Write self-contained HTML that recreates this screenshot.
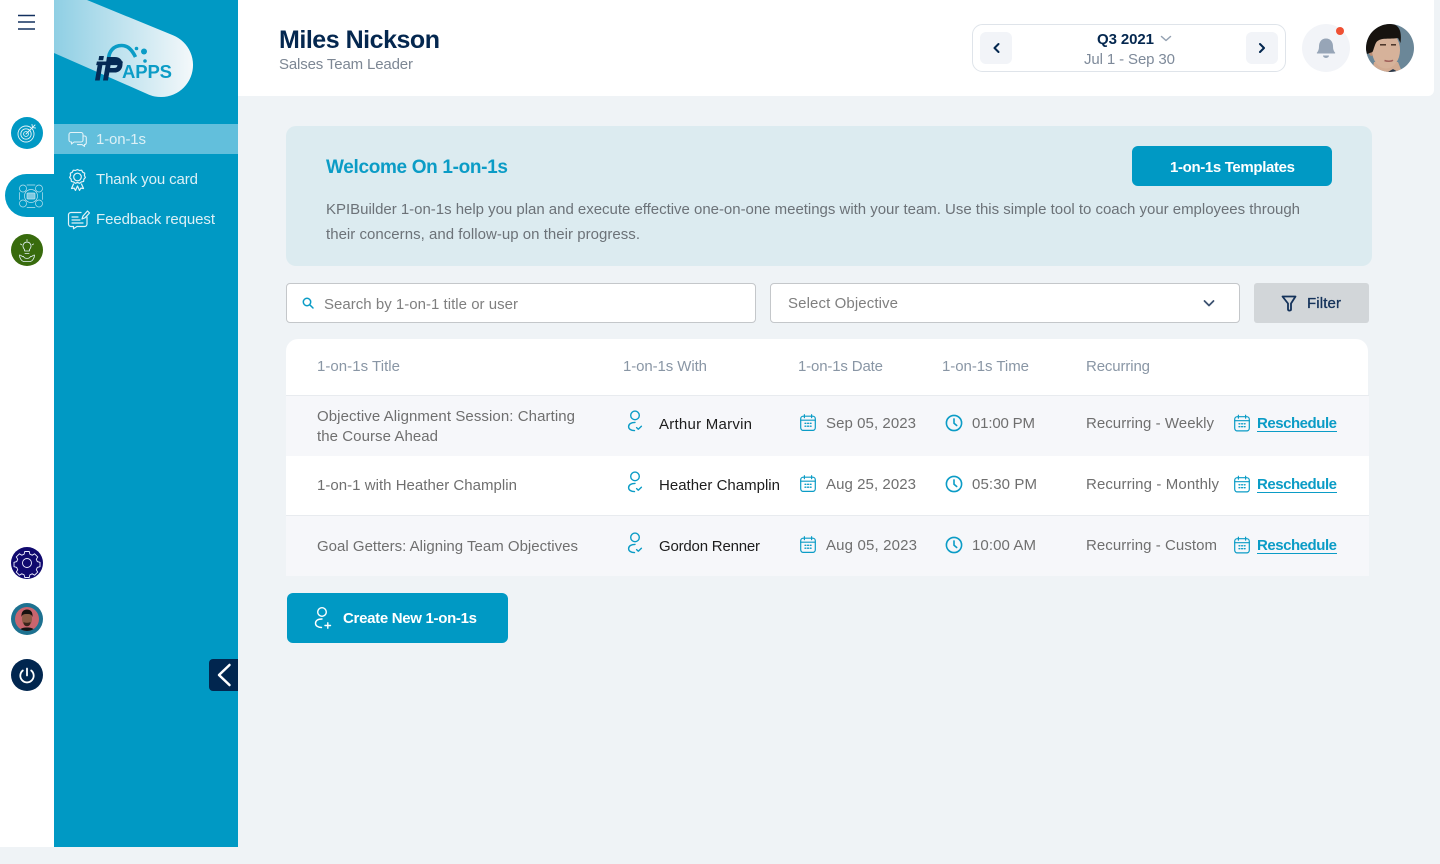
<!DOCTYPE html>
<html lang="en"><head><meta charset="utf-8"><title>1-on-1s</title>
<style>
html,body{margin:0;padding:0;width:1440px;height:864px;overflow:hidden;background:#eff3f6}
svg{position:absolute;left:0;top:0;display:block}
text{font-family:"Liberation Sans",sans-serif;font-size:15px}
.b{font-weight:700}
.g{fill:#6f6f6f}.h{fill:#8996a5}.d{fill:#1d1d1d}.s{fill:#dcf0f6}.l{fill:#0b9cc6;font-weight:700}
.ic{fill:none;stroke:#0b9cc6;stroke-width:1.5;stroke-linecap:round;stroke-linejoin:round}
.w{fill:none;stroke:#e4f3f8;stroke-width:1.1;stroke-linecap:round;stroke-linejoin:round}
</style></head><body>
<svg width="1440" height="864" viewBox="0 0 1440 864" xmlns="http://www.w3.org/2000/svg">
<defs>
<linearGradient id="pill" x1="54" x2="193" y1="0" y2="0" gradientUnits="userSpaceOnUse"><stop offset="0" stop-color="#8fcfe4"/><stop offset="1" stop-color="#f4f8fa"/></linearGradient>
<g id="cal" class="ic" style="stroke-width:1.2"><rect x="0.7" y="2.2" width="14.6" height="14.2" rx="2.6"/><path d="M0.7 6.2H15.3M4.4 0.7V3.6M11.6 0.7V3.6"/><path d="M5 9.3h.9M7.6 9.3h.9M10.2 9.3h.9M5 12.2h.9M7.6 12.2h.9M10.2 12.2h.9" stroke-width="1.3"/></g>
<g id="usr" class="ic" style="stroke-width:1.4"><circle cx="8" cy="5.4" r="4.3"/><path d="M8 12.4C4.3 12.4 1.6 14 1.6 16.6C1.6 19 4 20.6 7.5 20.6"/><path d="M9.6 17.6L11.3 19.2L14.4 16.2"/></g>
<g id="clk" class="ic" style="stroke-width:1.6"><circle cx="8.5" cy="8.5" r="7.6"/><path d="M8.5 4.4V8.8L11.2 11"/></g>
<clipPath id="av1"><circle cx="1390" cy="48" r="24"/></clipPath>
<clipPath id="av2"><circle cx="27" cy="619" r="12"/></clipPath>
</defs>

<rect width="1440" height="864" fill="#eff3f6"/>
<!-- top bar -->
<path d="M238 0H1434V90a6 6 0 0 1-6 6H238Z" fill="#fff"/>
<!-- left rail -->
<rect x="0" y="0" width="54" height="847" fill="#fff"/>
<rect x="54" y="0" width="184" height="847" fill="#0099c4"/>
<!-- hamburger -->
<path d="M18 15.5H35M18 22H35M18 29H35" stroke="#12305f" stroke-width="1.6" fill="none"/>
<!-- logo -->
<path d="M54 0H87L173 35.3A32 32 0 0 1 149 94.7L54 53Z" fill="url(#pill)"/>
<path d="M108.500 60C108.500 51 114 45.500 121.500 45.500C128 45.500 132 50 135.500 57" fill="none" stroke="#0b9cc6" stroke-width="3.600"/>
<circle cx="144" cy="51.500" r="3" fill="#0b9cc6"/><circle cx="136.500" cy="48.500" r="1.800" fill="#0b9cc6"/><circle cx="145" cy="61" r="1.800" fill="#0b9cc6"/>
<text x="122" y="78" textLength="50" lengthAdjust="spacing" style="font-size:18.500px;font-weight:700" fill="#0b9cc6">APPS</text>
<rect x="96" y="61.500" width="26" height="3.600" fill="#052a55" transform="skewX(-12) translate(14 0)"/>
<text x="95" y="80" textLength="27" lengthAdjust="spacingAndGlyphs" style="font-size:32px;font-weight:700;font-style:italic;stroke:#052a55;stroke-width:.9" fill="#052a55">iP</text>
<!-- active item -->
<rect x="54" y="124" width="184" height="30" fill="#62bfdc"/>
<!-- rail buttons -->
<circle cx="27" cy="133" r="16" fill="#0099c4"/>
<g class="w" style="stroke-width:.9"><circle cx="26" cy="134" r="8"/><circle cx="26" cy="134" r="5.200"/><circle cx="26" cy="134" r="2.400"/><path d="M26 134L35 125M32 124.500L32.500 127.500L35.500 128"/></g>
<path d="M54 174H26.500A21.500 21.500 0 0 0 26.500 217H54Z" fill="#0099c4"/>
<g class="w" style="stroke-width:.7;stroke:#bfe3ef"><rect x="27" y="193" width="8" height="6" rx="1" fill="#7fc9e0"/><circle cx="31" cy="196" r="6.500"/><circle cx="23" cy="188.500" r="3.500"/><circle cx="39" cy="188.500" r="3.500"/><circle cx="23" cy="203.500" r="3.500"/><circle cx="39" cy="203.500" r="3.500"/><path d="M27 185H35M27 207.500H35M19.500 192.500V199.500M42.500 192.500V199.500"/></g>
<circle cx="27" cy="250" r="16" fill="#386b0d"/>
<g class="w" style="stroke-width:.85"><path d="M23.500 248a4 4 0 1 1 7 0c-.8 1-1.200 1.800-1.200 3h-4.600c0-1.200-.4-2-1.200-3Z"/><path d="M25 253.500h4M27 239.500v1.500M20.500 244l1.300.8M33.500 244l-1.300.8"/><path d="M19.500 255c2 0 2 2 4 1.500c1 2.500 6 2.500 7 0c2 .5 2-1.500 4-1.500c0 3-2 6-4 6.500h-7c-2-.5-4-3.500-4-6.500Z"/></g>
<circle cx="27" cy="563" r="16" fill="#10096e"/>
<g fill="none" stroke="#eef0ff" stroke-width=".9"><circle cx="27" cy="563" r="4.500"/><path d="M24.800 551.500h4.400l.7 2.700l2.300 1l2.400-1.400l3.100 3.100l-1.400 2.400l1 2.300l2.700.7v4.400l-2.700.7l-1 2.300l1.400 2.400l-3.100 3.100l-2.400-1.400l-2.300 1l-.7 2.700h-4.400l-.7-2.700l-2.300-1l-2.400 1.400l-3.100-3.100l1.400-2.400l-1-2.300l-2.700-.7v-4.400l2.700-.7l1-2.300l-1.400-2.400l3.100-3.100l2.400 1.400l2.300-1Z"/></g>
<circle cx="27" cy="619" r="16" fill="#1d7190"/>
<g clip-path="url(#av2)"><rect x="15" y="607" width="24" height="24" fill="#c9656e"/><path d="M19 632c0-3.500 4-4.500 8-4.500s8 1 8 4.500Z" fill="#141414"/><ellipse cx="27" cy="619" rx="5" ry="7" fill="#8c5b45"/><path d="M21.500 617c-.5-5 2-7.500 5.500-7.500s6 2.500 5.500 7.500c-1-2.500-2-3-5.500-3s-4.500.5-5.500 3Z" fill="#17110f"/><path d="M23.500 622c0 3 1.500 4.200 3.500 4.200s3.500-1.200 3.500-4.200c-2 1-5 1-7 0Z" fill="#3a241b"/></g>
<circle cx="27" cy="675" r="16" fill="#01264f"/>
<path d="M27 668.500V675.500M22.800 670.500A6.700 6.700 0 1 0 31.200 670.500" fill="none" stroke="#fff" stroke-width="1.800" stroke-linecap="round"/>
<path d="M238 659H213a4 4 0 0 0-4 4v24a4 4 0 0 0 4 4h25Z" fill="#01264f"/>
<path d="M229.500 665L219 675L229.500 685" fill="none" stroke="#fff" stroke-width="2.500" stroke-linecap="round" stroke-linejoin="round"/>
<!-- sidebar icons -->
<g class="w"><path d="M71 132.500h10a2 2 0 0 1 2 2v5.500a2 2 0 0 1-2 2h-7l-2.500 2v-2h-.5a2 2 0 0 1-2-2v-5.500a2 2 0 0 1 2-2Z"/><path d="M83 136h1.500a1.800 1.800 0 0 1 1.800 1.800v5a1.800 1.800 0 0 1-1.800 1.800v1.800l-2.500-1.800h-4.500"/></g>
<g class="w" style="stroke-width:1.200"><circle cx="77.500" cy="177" r="3.800"/><path d="M77.500 169.500l2 1 2.200-.3 1 2 2 1 -.3 2.300 1 2-1.500 1.600-.3 2.300-2.200.5-1.700 1.400-2.200-.8-2.200.8-1.700-1.400-2.200-.5-.3-2.300-1.500-1.600 1-2-.3-2.300 2-1 1-2 2.200.3Z"/><path d="M73.500 184l-2 4.500 2.600-.4 1.400 2.300 2-4.400 2 4.400 1.400-2.300 2.600.4-2-4.500"/></g>
<g class="w" style="stroke-width:1.200"><path d="M81 212.500H71a2.500 2.500 0 0 0-2.500 2.500v9a2.500 2.500 0 0 0 2.500 2.500h2.500v2.300l3.500-2.300h7.500a2.500 2.500 0 0 0 2.500-2.500v-7"/><path d="M72 217h6M72 220h8M72 223h11"/><path d="M82 219l1-3 4.500-5 2 2-4.500 4.800Z"/></g>
<text class="s" x="96" y="144" textLength="50" lengthAdjust="spacing">1-on-1s</text>
<text class="s" x="96" y="184" textLength="102" lengthAdjust="spacing">Thank you card</text>
<text class="s" x="96" y="224" textLength="119" lengthAdjust="spacing">Feedback request</text>

<!-- header -->
<text x="279" y="48" textLength="161" lengthAdjust="spacing" style="font-size:25px;font-weight:700" fill="#04274f">Miles Nickson</text>
<text x="279" y="69" textLength="134" lengthAdjust="spacing" fill="#7d8794">Salses Team Leader</text>
<rect x="972.500" y="24.500" width="313" height="47" rx="10" fill="#fff" stroke="#dfe4ea"/>
<rect x="980" y="32" width="32" height="32" rx="6" fill="#f2f4f8"/><rect x="1246" y="32" width="32" height="32" rx="6" fill="#f2f4f8"/>
<path d="M998.500 44L994.500 48L998.500 52M1260 44L1264 48L1260 52" fill="none" stroke="#04274f" stroke-width="2" stroke-linecap="round" stroke-linejoin="round"/>
<text class="b" x="1097" y="44" textLength="57" lengthAdjust="spacing" fill="#04274f">Q3 2021</text>
<path d="M1161.500 36.500L1166 40.500L1170.500 36.500" fill="none" stroke="#94a1b2" stroke-width="1.500" stroke-linecap="round" stroke-linejoin="round"/>
<text x="1084" y="64" textLength="91" lengthAdjust="spacing" fill="#7e8a9a">Jul 1 - Sep 30</text>
<circle cx="1326" cy="48" r="24" fill="#f2f4f8"/>
<path d="M1326 39c-4.500 0-6.500 3.500-6.500 7.500c0 3.500-.8 5-2.200 6.500h17.400c-1.400-1.500-2.200-3-2.200-6.500c0-4-2-7.500-6.500-7.500Z" fill="#97a5b7" stroke="#97a5b7" stroke-linejoin="round"/><path d="M1323 55.500h6a3 2.500 0 0 1-6 0Z" fill="#97a5b7"/>
<circle cx="1340" cy="31" r="4" fill="#ef5033"/>
<g clip-path="url(#av1)"><rect x="1366" y="24" width="48" height="48" fill="#6b8798"/>
<path d="M1374 62L1372 72H1402L1398 62Z" fill="#d2ab92"/>
<ellipse cx="1371.500" cy="51" rx="3" ry="5" fill="#b98c74"/>
<ellipse cx="1386" cy="50" rx="14" ry="18.500" fill="#d6b29a"/>
<path d="M1366 50C1365 33 1378 22 1392 24C1399 25 1402 31 1400.500 43L1398 38C1390 39.500 1381 37 1376.500 42C1374.500 45 1374 49 1372.500 52L1367 54Z" fill="#17130f"/>
<path d="M1380 44.800h6M1391 44.800h5" stroke="#3a271c" stroke-width="1.300"/>
<path d="M1384.500 60.500c3 1.200 6.500 1 8.500-.3" stroke="#a0605a" stroke-width="1.500" fill="none"/>
<path d="M1388 72l5-3l5 3Z" fill="#28374a"/></g>

<!-- banner -->
<rect x="286" y="126" width="1086" height="140" rx="10" fill="#dcebf0"/>
<text x="326" y="173" textLength="182" lengthAdjust="spacing" style="font-size:19px;font-weight:700" fill="#0b9cc6">Welcome On 1-on-1s</text>
<rect x="1132" y="146" width="200" height="40" rx="6" fill="#0099c4"/>
<text class="b" x="1170" y="172" textLength="125" lengthAdjust="spacing" fill="#fff">1-on-1s Templates</text>
<text x="326" y="214" textLength="974" lengthAdjust="spacing" fill="#6c7278">KPIBuilder 1-on-1s help you plan and execute effective one-on-one meetings with your team. Use this simple tool to coach your employees through</text>
<text x="326" y="239" textLength="314" lengthAdjust="spacing" fill="#6c7278">their concerns, and follow-up on their progress.</text>

<!-- controls -->
<rect x="286.500" y="283.500" width="469" height="39" rx="3.500" fill="#fff" stroke="#c4c7ca"/>
<circle cx="307" cy="302" r="3.700" fill="none" stroke="#0b9cc6" stroke-width="1.500"/><path d="M309.800 304.800L313 308" stroke="#0b9cc6" stroke-width="1.500" stroke-linecap="round"/>
<text x="324" y="309" textLength="194" lengthAdjust="spacing" fill="#7f7f7f">Search by 1-on-1 title or user</text>
<rect x="770.500" y="283.500" width="469" height="39" rx="3.500" fill="#fff" stroke="#c4c7ca"/>
<text x="788" y="308" textLength="110" lengthAdjust="spacing" fill="#7f7f7f">Select Objective</text>
<path d="M1204.500 301L1209 305.500L1213.500 301" fill="none" stroke="#3c5170" stroke-width="1.800" stroke-linecap="round" stroke-linejoin="round"/>
<rect x="1254" y="283" width="115" height="40" rx="3" fill="#d2d6d9"/>
<path d="M1282.500 296.500H1295.500L1291 303.500V309.500C1291 310.800 1288 311 1288 309.500V303.500Z" fill="none" stroke="#14325a" stroke-width="1.800" stroke-linejoin="round"/>
<text x="1307" y="308" textLength="34" lengthAdjust="spacing" style="stroke:#14325a;stroke-width:.3" fill="#14325a">Filter</text>

<!-- table -->
<path d="M286 395V351a12 12 0 0 1 12-12H1356a12 12 0 0 1 12 12V395Z" fill="#fff"/>
<rect x="286" y="395" width="1083" height="1" fill="#e8ebef"/>
<rect x="286" y="396" width="1083" height="60" fill="#f6f7fa"/>
<rect x="286" y="456" width="1083" height="59" fill="#fff"/>
<rect x="286" y="515" width="1083" height="1" fill="#e8ebef"/>
<rect x="286" y="516" width="1083" height="60" fill="#f6f7fa"/>
<text class="h" x="317" y="371" textLength="83" lengthAdjust="spacing">1-on-1s Title</text>
<text class="h" x="623" y="371" textLength="84" lengthAdjust="spacing">1-on-1s With</text>
<text class="h" x="798" y="371" textLength="85" lengthAdjust="spacing">1-on-1s Date</text>
<text class="h" x="942" y="371" textLength="87" lengthAdjust="spacing">1-on-1s Time</text>
<text class="h" x="1086" y="371" textLength="64" lengthAdjust="spacing">Recurring</text>

<text class="g" x="317" y="421" textLength="258" lengthAdjust="spacing">Objective Alignment Session: Charting</text>
<text class="g" x="317" y="441" textLength="121" lengthAdjust="spacing">the Course Ahead</text>
<text class="g" x="317" y="490" textLength="200" lengthAdjust="spacing">1-on-1 with Heather Champlin</text>
<text class="g" x="317" y="551" textLength="261" lengthAdjust="spacing">Goal Getters: Aligning Team Objectives</text>

<use href="#usr" x="627" y="410"/><use href="#usr" x="627" y="471"/><use href="#usr" x="627" y="532"/>
<text class="d" x="659" y="429" textLength="93" lengthAdjust="spacing">Arthur Marvin</text>
<text class="d" x="659" y="490" textLength="121" lengthAdjust="spacing">Heather Champlin</text>
<text class="d" x="659" y="551" textLength="101" lengthAdjust="spacing">Gordon Renner</text>

<use href="#cal" x="800" y="414"/><use href="#cal" x="800" y="475"/><use href="#cal" x="800" y="536"/>
<text class="g" x="826" y="428" textLength="90" lengthAdjust="spacing">Sep 05, 2023</text>
<text class="g" x="826" y="489" textLength="90" lengthAdjust="spacing">Aug 25, 2023</text>
<text class="g" x="826" y="550" textLength="91" lengthAdjust="spacing">Aug 05, 2023</text>

<use href="#clk" x="945.500" y="414.500"/><use href="#clk" x="945.500" y="475.500"/><use href="#clk" x="945.500" y="536.500"/>
<text class="g" x="972" y="428" textLength="63" lengthAdjust="spacing">01:00 PM</text>
<text class="g" x="972" y="489" textLength="65" lengthAdjust="spacing">05:30 PM</text>
<text class="g" x="972" y="550" textLength="64" lengthAdjust="spacing">10:00 AM</text>

<text class="g" x="1086" y="428" textLength="128" lengthAdjust="spacing">Recurring - Weekly</text>
<text class="g" x="1086" y="489" textLength="133" lengthAdjust="spacing">Recurring - Monthly</text>
<text class="g" x="1086" y="550" textLength="131" lengthAdjust="spacing">Recurring - Custom</text>

<use href="#cal" x="1234" y="414.500"/><use href="#cal" x="1234" y="475.500"/><use href="#cal" x="1234" y="536.500"/>
<text class="l" x="1257" y="428" textLength="80" lengthAdjust="spacing">Reschedule</text>
<text class="l" x="1257" y="489" textLength="80" lengthAdjust="spacing">Reschedule</text>
<text class="l" x="1257" y="550" textLength="80" lengthAdjust="spacing">Reschedule</text>
<path d="M1257 431.500H1337M1257 492.500H1337M1257 553.500H1337" stroke="#0b9cc6" stroke-width="1"/>

<!-- create -->
<rect x="287" y="593" width="221" height="50" rx="6" fill="#0099c4"/>
<g fill="none" stroke="#fff" stroke-width="1.400" stroke-linecap="round"><circle cx="322" cy="612" r="4.300"/><path d="M322 619C318 619 315.500 620.500 315.500 623.200C315.500 625.800 318 627.500 321.500 627.500M325 625.500H330.500M327.800 622.800V628.200"/></g>
<text class="b" x="343" y="623" textLength="134" lengthAdjust="spacing" fill="#fff">Create New 1-on-1s</text>
</svg>
</body></html>
